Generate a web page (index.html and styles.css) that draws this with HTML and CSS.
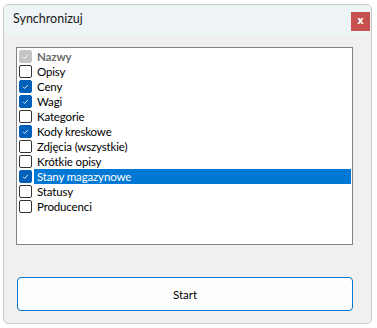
FILE: index.html
```html
<!DOCTYPE html>
<html lang="pl">
<head>
  <meta charset="UTF-8" />
  <title>Synchronizuj</title>
  <link rel="stylesheet" href="styles.css">
</head>
<body>
  <div class="okno">
    <div class="pasek">
      <span class="tytul">Synchronizuj</span>
      <button class="zamknij">x</button>
    </div>
    <div class="tresc">
      <div class="lista">
        <div class="pozycja wylaczona"><span class="box on"><svg viewBox="0 0 13 13"><path d="M3.5 6.8l2 2 4-4.3"/></svg></span><span class="etykieta">Nazwy</span></div>
        <div class="pozycja"><span class="box"></span><span class="etykieta">Opisy</span></div>
        <div class="pozycja"><span class="box on"><svg viewBox="0 0 13 13"><path d="M3.5 6.8l2 2 4-4.3"/></svg></span><span class="etykieta">Ceny</span></div>
        <div class="pozycja"><span class="box on"><svg viewBox="0 0 13 13"><path d="M3.5 6.8l2 2 4-4.3"/></svg></span><span class="etykieta">Wagi</span></div>
        <div class="pozycja"><span class="box"></span><span class="etykieta">Kategorie</span></div>
        <div class="pozycja"><span class="box on"><svg viewBox="0 0 13 13"><path d="M3.5 6.8l2 2 4-4.3"/></svg></span><span class="etykieta">Kody kreskowe</span></div>
        <div class="pozycja"><span class="box"></span><span class="etykieta">Zdjęcia (wszystkie)</span></div>
        <div class="pozycja"><span class="box"></span><span class="etykieta">Krótkie opisy</span></div>
        <div class="pozycja wybrana"><span class="box on"><svg viewBox="0 0 13 13"><path d="M3.5 6.8l2 2 4-4.3"/></svg></span><span class="etykieta">Stany magazynowe</span></div>
        <div class="pozycja"><span class="box"></span><span class="etykieta">Statusy</span></div>
        <div class="pozycja"><span class="box"></span><span class="etykieta">Producenci</span></div>
      </div>
      <button class="start">Start</button>
    </div>
  </div>
</body>
</html>
```

FILE: styles.css
```css
body {
  margin: 0;
  padding: 4px 5px 0 3px;
  background: #ffffff;
  font-family: Lato, "Noto Sans", sans-serif;
  font-size: 11.5px;
  letter-spacing: -0.15px;
  color: #000;
}

.okno {
  height: 318px;
  border: 1px solid #c9c9c9;
  border-radius: 5px;
  background: #f0f0f0;
  display: flex;
  flex-direction: column;
  overflow: hidden;
}

.pasek {
  height: 30px;
  background: #eef3f6;
  display: flex;
  align-items: center;
  justify-content: space-between;
  padding-left: 9px;
}

.tytul {
  font-size: 12.5px;
  letter-spacing: 0;
  color: #1a1a1a;
  margin-top: -3px;
}

.zamknij {
  width: 19px;
  height: 19px;
  margin-right: 1px;
  margin-top: 3px;
  border: none;
  background: #c75050;
  color: #fff;
  font-family: "DejaVu Sans", sans-serif;
  font-weight: bold;
  font-size: 10px;
  padding: 0 0 2px 0;
}

.tresc {
  flex: 1;
  padding: 12px 18px 0 12px;
  display: flex;
  flex-direction: column;
}

.lista {
  height: 195px;
  border: 1px solid #82828a;
  background: #fff;
  padding: 1px 1px 0 2px;
}

.pozycja {
  height: 15px;
  display: flex;
  align-items: center;
}

.box {
  width: 11px;
  height: 11px;
  border: 1px solid #333;
  border-radius: 2px;
  background: #fff;
  margin-right: 2px;
  flex: none;
  display: flex;
}

.box svg {
  width: 11px;
  height: 11px;
  fill: none;
  stroke: #fff;
  stroke-width: 1;
}

.box.on {
  background: #005fb8;
  border-color: #005fb8;
}

.wylaczona .box {
  background: #c5c5c5;
  border-color: #c5c5c5;
}

.wylaczona .etykieta {
  color: #6d6d6d;
  font-weight: bold;
}

.etykieta {
  flex: 1;
  height: 15px;
  line-height: 15px;
  padding-left: 3px;
  white-space: nowrap;
}

.wybrana .etykieta {
  background: #0078d4;
  color: #fff;
}

.start {
  margin-top: 32px;
  margin-left: 1px;
  height: 34px;
  border: 1px solid #0078d4;
  border-radius: 4px;
  background: #fdfdfd;
  font-family: inherit;
  font-size: 11.5px;
  color: #000;
}
```
